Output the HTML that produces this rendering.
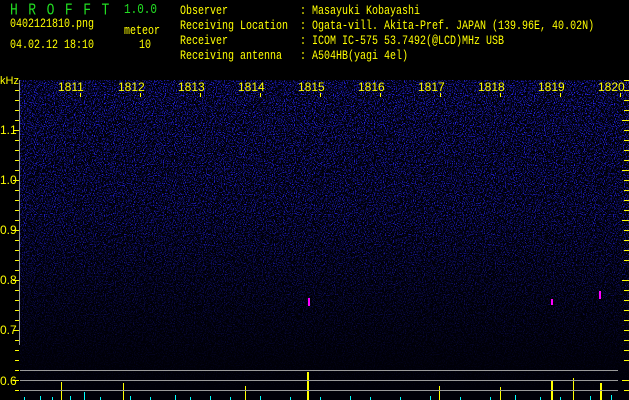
<!DOCTYPE html><html><head><style>
body{margin:0;width:629px;height:400px;background:#000;overflow:hidden;position:relative;font-family:"Liberation Mono",monospace;}
.t{position:absolute;color:#ffff00;font-size:10px;line-height:12px;white-space:pre;transform-origin:0 0;transform:scaleY(1.25);}
.g{color:#22dd22;}
</style></head><body>
<div class="t g" style="left:10px;top:3px;font-size:13px;letter-spacing:10.5px">HROFFT</div>
<div class="t g" style="left:124px;top:3px;font-size:11px">1.0.0</div>
<div class="t" style="left:10px;top:18px">0402121810.png</div>
<div class="t" style="left:124px;top:25px">meteor</div>
<div class="t" style="left:10px;top:39px">04.02.12 18:10</div>
<div class="t" style="left:139px;top:39px">10</div>
<div class="t" style="left:180px;top:5px">Observer            : Masayuki Kobayashi
Receiving Location  : Ogata-vill. Akita-Pref. JAPAN (139.96E, 40.02N)
Receiver            : ICOM IC-575 53.7492(@LCD)MHz USB
Receiving antenna   : A504HB(yagi 4el)</div>
<svg style="position:absolute;left:0;top:0" width="629" height="400">
<defs>
<linearGradient id="gr" x1="0" y1="0" x2="0" y2="1">
<stop offset="0" stop-color="#fff"/><stop offset="0.4" stop-color="#ccc"/><stop offset="0.7" stop-color="#555"/><stop offset="0.9" stop-color="#111"/><stop offset="1" stop-color="#000"/></linearGradient>
<mask id="m"><rect x="20" y="80" width="609" height="320" fill="url(#gr)"/></mask>
<filter id="n" x="0" y="0" width="1" height="1"><feTurbulence type="fractalNoise" baseFrequency="0.9" numOctaves="1" seed="3"/>
<feColorMatrix values="0 0 0 0 0.02  0 0 0 0 0.02  0 0 0 0 1  8 0 0 0 -4.3"/></filter>
</defs>
<rect x="20" y="80" width="609" height="320" fill="#000008"/>
<g mask="url(#m)"><rect x="20" y="80" width="609" height="320" filter="url(#n)"/></g>
<g fill="#ffff00" font-family="Liberation Sans,sans-serif" font-size="12">
<text x="0" y="84" font-size="11" fill="#ffff00">kHz</text>
<text x="0" y="134">1.1</text><text x="0" y="184">1.0</text><text x="0" y="234">0.9</text>
<text x="0" y="284">0.8</text><text x="0" y="334">0.7</text><text x="0" y="385">0.6</text>
<text x="58" y="91">1811</text><text x="118" y="91">1812</text><text x="178" y="91">1813</text><text x="238" y="91">1814</text><text x="298" y="91">1815</text><text x="358" y="91">1816</text><text x="418" y="91">1817</text><text x="478" y="91">1818</text><text x="538" y="91">1819</text><text x="598" y="91">1820</text>
</g>
<g stroke="#ffff00" stroke-width="1">
<path d="M15 90.5h4M15 100.5h4M15 110.5h4M15 120.5h4M13 130.5h6M15 140.5h4M15 150.5h4M15 160.5h4M15 170.5h4M13 180.5h6M15 190.5h4M15 200.5h4M15 210.5h4M15 220.5h4M13 230.5h6M15 240.5h4M15 250.5h4M15 260.5h4M15 270.5h4M13 280.5h6M15 290.5h4M15 300.5h4M15 310.5h4M15 320.5h4M13 330.5h6M15 340.5h4M15 350.5h4M15 360.5h4M15 370.5h4M13 380.5h6M15 390.5h4"/>
<path d="M624 80.5h5M624 90.5h5M624 100.5h5M624 110.5h5M622 120.5h7M624 130.5h5M624 140.5h5M624 150.5h5M624 160.5h5M622 170.5h7M624 180.5h5M624 190.5h5M624 200.5h5M624 210.5h5M622 220.5h7M624 230.5h5M624 240.5h5M624 250.5h5M624 260.5h5M622 280.5h7M624 290.5h5M624 300.5h5M624 310.5h5M624 320.5h5M624 330.5h5M624 340.5h5M624 350.5h5M624 360.5h5M622 380.5h7M624 390.5h5"/>
<path d="M80.5 93v4M140.5 93v4M200.5 93v4M260.5 93v4M320.5 93v4M380.5 93v4M440.5 93v4M500.5 93v4M560.5 93v4M620.5 93v4"/>
<path d="M61.5 382v18M123.5 383v17M245.5 386v14M439.5 386v14M500.5 387v13M573.5 378v22"/>
<path d="M308 372v28M552 381v19M601 383v17" stroke-width="2"/>
</g>
<path d="M19.5 80v265" stroke="#999"/>
<g stroke="#999"><path d="M20 370.5h598M20 380.5h598M20 390.5h598"/></g>
<g stroke="#0ff" stroke-width="1"><path d="M24.5 400v-3M40.5 400v-4M52.5 400v-3M70.5 400v-4M84.5 400v-8M100.5 400v-3M130.5 400v-4M150.5 400v-3M175.5 400v-5M190.5 400v-3M210.5 400v-4M230.5 400v-3M260.5 400v-4M290.5 400v-3M320.5 400v-3M350.5 400v-4M370.5 400v-3M400.5 400v-3M430.5 400v-4M460.5 400v-3M490.5 400v-3M515.5 400v-5M540.5 400v-3M560.5 400v-3M590.5 400v-4M611.5 400v-5"/></g>
<g fill="#f0f"><rect x="308" y="298" width="2" height="8"/><rect x="551" y="299" width="2" height="6"/><rect x="599" y="291" width="2" height="8"/></g>
</svg>
</body></html>
